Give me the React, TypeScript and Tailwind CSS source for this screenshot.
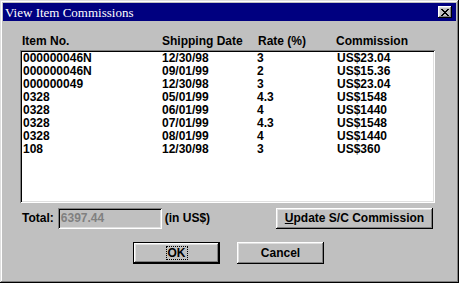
import React from 'react';

const rows = [
    ['000000046N', '12/30/98', '3', 'US$23.04'],
    ['000000046N', '09/01/99', '2', 'US$15.36'],
    ['000000049', '12/30/98', '3', 'US$23.04'],
    ['0328', '05/01/99', '4.3', 'US$1548'],
    ['0328', '06/01/99', '4', 'US$1440'],
    ['0328', '07/01/99', '4.3', 'US$1548'],
    ['0328', '08/01/99', '4', 'US$1440'],
    ['108', '12/30/98', '3', 'US$360'],
];

// win95 bevels
const raised = 'shadow-[inset_-1px_-1px_#000,inset_1px_1px_#fff,inset_-2px_-2px_#808080,inset_2px_2px_#dfdfdf]';
const sunken = 'shadow-[inset_1px_1px_#808080,inset_-1px_-1px_#fff,inset_2px_2px_#000,inset_-2px_-2px_#dfdfdf]';

const App: React.FC = () => {
    return (
        <div className="w-[459px] h-[283px] bg-[#c0c0c0] p-[3px] shadow-[inset_-1px_-1px_#000,inset_1px_1px_#dfdfdf,inset_-2px_-2px_#808080,inset_2px_2px_#fff] font-['Liberation_Sans',Arial,sans-serif] font-bold text-[12px] leading-[13px] text-black">
            {/* Title bar */}
            <div className="h-[18px] bg-[#000080] flex items-center justify-between pl-[2px] pr-[4px]">
                <span className="font-['Liberation_Serif','Times_New_Roman',serif] font-normal text-[13px] text-white">View Item Commissions</span>
                <button className={`w-[14px] h-[12px] bg-[#c0c0c0] flex items-center justify-center ${raised}`}>
                    <svg width="8" height="7" viewBox="0 0 8 7" shapeRendering="crispEdges">
                        <path d="M0 0h2v1h-2zM6 0h2v1h-2zM1 1h2v1h-2zM5 1h2v1h-2zM2 2h4v1h-4zM3 3h2v1h-2zM2 4h4v1h-4zM1 5h2v1h-2zM5 5h2v1h-2zM0 6h2v1h-2zM6 6h2v1h-2z" fill="#000" />
                    </svg>
                </button>
            </div>

            <div className="pl-[17px] pt-[14px]">
                {/* Column headers */}
                <div className="grid grid-cols-[140px_96px_78px_1fr] pl-[2px]">
                    <span>Item No.</span>
                    <span>Shipping Date</span>
                    <span>Rate (%)</span>
                    <span>Commission</span>
                </div>

                {/* List box */}
                <div className={`w-[415px] h-[153px] mt-[2px] bg-white pt-[2px] pl-[3px] ${sunken}`}>
                    {rows.map((r, i) => (
                        <div key={i} className="grid grid-cols-[139px_95px_80px_1fr]">
                            <span>{r[0]}</span>
                            <span>{r[1]}</span>
                            <span>{r[2]}</span>
                            <span>{r[3]}</span>
                        </div>
                    ))}
                </div>

                {/* Total row */}
                <div className="w-[415px] flex items-center mt-[5px] pl-[2px]">
                    <span>Total:</span>
                    <div className={`w-[104px] h-[21px] ml-[4px] pl-[3px] flex items-center text-[#808080] ${sunken.replace('#dfdfdf', '#dfdfdf')}`}>
                        6397.44
                    </div>
                    <span className="ml-[3px]">(in US$)</span>
                    <button className={`ml-auto mr-[2px] w-[157px] h-[21px] ${raised}`}>
                        <span className="underline">U</span>pdate S/C Commission
                    </button>
                </div>

                {/* Buttons */}
                <div className="flex gap-[17px] mt-[13px] ml-[113px]">
                    <button className="w-[87px] h-[22px] border border-black">
                        <div className={`w-full h-full flex items-center justify-center ${raised}`}>
                            <span className="border border-dotted border-black px-[1px] leading-[12px]">OK</span>
                        </div>
                    </button>
                    <button className={`w-[87px] h-[22px] ${raised}`}>Cancel</button>
                </div>
            </div>
        </div>
    );
};

export default App;
